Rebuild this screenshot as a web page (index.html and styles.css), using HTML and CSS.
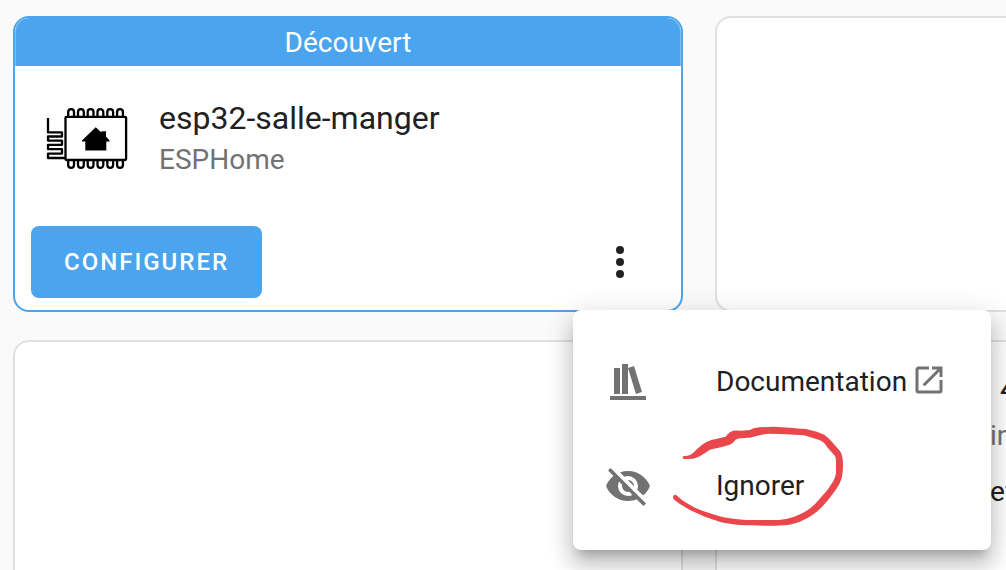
FILE: index.html
```html
<!DOCTYPE html>
<html lang="fr">
<head>
<meta charset="utf-8">
<title>Intégrations</title>
<link rel="stylesheet" href="styles.css">
</head>
<body>
<main class="grid">
  <article class="card card-discovered">
    <header class="banner">Découvert</header>
    <div class="integration">
      <svg class="logo" viewBox="47 98 80 80" aria-hidden="true">
        <g fill="none" stroke="#000" stroke-width="2.3" stroke-linejoin="round">
          <rect x="65.500" y="115.800" width="60.600" height="43.200" rx="1"/>
          <path d="M48 117V131.400H62V135.500H48V139.600H62V143.800H48V148.200H62V152.600H48V157H65"/>
          <path id="pins" d="M68.200 115V111a2.900 2.900 0 0 1 5.800 0V115M78 115V111a2.900 2.900 0 0 1 5.800 0V115M87.700 115V111a2.900 2.900 0 0 1 5.800 0V115M97.500 115V111a2.900 2.900 0 0 1 5.800 0V115M107.300 115V111a2.900 2.900 0 0 1 5.800 0V115M117.100 115V111a2.900 2.900 0 0 1 5.800 0V115"/>
          <use href="#pins" transform="matrix(1 0 0 -1 0 275)"/>
        </g>
        <path d="M95.700 126.200L101.500 131.500V130.200H106V135.500L109.500 139.500V140.500H106.300V149.500H85.300V140.500H82V139.500Z"/>
      </svg>
      <div>
        <h2 class="name">esp32-salle-manger</h2>
        <p class="domain">ESPHome</p>
      </div>
    </div>
    <footer class="actions">
      <button class="configure" type="button">CONFIGURER</button>
      <button class="more" type="button" aria-label="Plus d'actions">
        <svg class="icon" viewBox="0 0 24 24"><path d="M12,16A2,2 0 0,1 14,18A2,2 0 0,1 12,20A2,2 0 0,1 10,18A2,2 0 0,1 12,16M12,10A2,2 0 0,1 14,12A2,2 0 0,1 12,14A2,2 0 0,1 10,12A2,2 0 0,1 12,10M12,4A2,2 0 0,1 14,6A2,2 0 0,1 12,8A2,2 0 0,1 10,6A2,2 0 0,1 12,4Z"/></svg>
      </button>
    </footer>
    <nav class="menu">
      <a class="item" href="#documentation">
        <svg class="icon" viewBox="0 0 24 24" aria-hidden="true"><path d="M9 3V18H12V3H9M12 5L16 18L19 17L15 4L12 5M5 5V18H8V5H5M3 19V21H21V19H3Z"/></svg>
        <span>Documentation</span>
        <svg class="external" viewBox="0 0 24 24" aria-hidden="true"><path d="M14,3V5H17.590L7.760,14.830L9.170,16.240L19,6.410V10H21V3M19,19H5V5H12V3H5C3.890,3 3,3.900 3,5V19A2,2 0 0,0 5,21H19A2,2 0 0,0 21,19V12H19V19Z"/></svg>
      </a>
      <button class="item" type="button">
        <svg class="icon" viewBox="0 0 24 24" aria-hidden="true"><path d="M11.830,9L15,12.160C15,12.110 15,12.050 15,12A3,3 0 0,0 12,9C11.940,9 11.890,9 11.830,9M7.530,9.800L9.080,11.350C9.030,11.560 9,11.770 9,12A3,3 0 0,0 12,15C12.220,15 12.440,14.970 12.650,14.920L14.200,16.470C13.530,16.800 12.790,17 12,17A5,5 0 0,1 7,12C7,11.210 7.200,10.470 7.530,9.800M2,4.270L4.280,6.550L4.730,7C3.080,8.300 1.780,10 1,12C2.730,16.390 7,19.500 12,19.500C13.550,19.500 15.030,19.200 16.380,18.660L16.810,19.080L19.730,22L21,20.730L3.270,3M12,7A5,5 0 0,1 17,12C17,12.640 16.870,13.260 16.640,13.820L19.570,16.750C21.070,15.500 22.270,13.860 23,12C21.270,7.610 17,4.500 12,4.500C10.600,4.500 9.260,4.750 8,5.200L10.170,7.350C10.740,7.130 11.350,7 12,7Z"/></svg>
        <span>Ignorer</span>
      </button>
      <svg class="scribble" viewBox="0 0 600 390" aria-hidden="true"><path d="M71 138C83 139 91 136 99 129C116 112 134 96 154 90L197 80C211 62 220 60 241 62L270 60C286 50 310 52 340 50C374 52 405 54 438 57C458 62 480 67 494 75C512 88 523 104 538 121C553 138 550 180 545 205C539 225 525 244 511 261C490 288 466 315 432 329C398 346 370 347 330 347C275 347 220 346 181 336C143 324 83 303 41 268C35 257 45 249 52 258C80 285 125 304 164 314C211 329 262 331 310 330C361 331 387 329 423 311C459 296 477 268 499 244C516 220 529 204 528 181C527 164 530 149 525 138L501 111C494 98 487 92 466 86L432 76C395 73 360 72 325 71C302 73 290 78 275 82C258 86 240 82 226 90C219 98 215 105 199 107C180 113 164 115 150 119C133 129 119 142 99 146L71 147C67 145 67 140 71 138Z"/></svg>
    </nav>
  </article>
  <article class="card"></article>
  <article class="card"></article>
  <article class="card card-cut">
    <h2 class="name">4</h2>
    <p class="domain">in</p>
    <p class="detail">ef</p>
  </article>
</main>
</body>
</html>
```

FILE: styles.css
```css
* {
  box-sizing: border-box;
}

body {
  margin: 0;
  background: #fafafa;
  color: #212121;
  font-family: Roboto, sans-serif;
  font-size: 28px;
  line-height: 40px;
  overflow: hidden;
}

h2,
p {
  margin: 0;
  font-weight: 400;
}

button {
  border: 0;
  font: inherit;
  color: inherit;
  cursor: pointer;
}

.grid {
  display: grid;
  grid-template-columns: repeat(2, minmax(670px, 1fr));
  grid-auto-rows: minmax(296px, auto);
  gap: 28px 32px;
  padding: 16px 13px;
}

.card {
  position: relative;
  display: flex;
  flex-direction: column;
  background: #fff;
  border: 2px solid #e0e0e0;
  border-radius: 16px;
}

.card-discovered {
  z-index: 1;
  border-color: #4ba5ee;
}

.banner {
  height: 48px;
  line-height: 50px;
  border-radius: 14px 14px 0 0;
  background: #4ba5ee;
  box-shadow: inset 1px 0 rgba(255, 255, 255, 0.3), inset -1px 0 rgba(255, 255, 255, 0.3);
  color: #fff;
  text-align: center;
}

.integration {
  display: flex;
  align-items: center;
  gap: 32px;
  padding: 32px 32px 0;
}

.logo {
  width: 80px;
  height: 80px;
  overflow: visible;
}

.name {
  font-size: 32px;
  line-height: 40px;
}

.domain {
  margin-top: 2px;
  color: #727272;
}

.actions {
  display: flex;
  align-items: center;
  justify-content: space-between;
  margin-top: auto;
  padding: 0 37px 12px 16px;
}

.configure {
  height: 72px;
  padding: 0 33px;
  border-radius: 8px;
  background: #4ba5ee;
  color: #fff;
  font-size: 24px;
  font-weight: 500;
  letter-spacing: 2px;
}

.more {
  display: flex;
  padding: 0;
  background: none;
}

.icon {
  width: 48px;
  height: 48px;
  fill: currentColor;
}

.menu {
  position: absolute;
  top: 292px;
  left: 558px;
  width: 418px;
  padding: 20px 0 12px;
  border-radius: 8px;
  background: #fff;
  box-shadow: 0 10px 10px -6px rgba(0, 0, 0, 0.2), 0 16px 20px 2px rgba(0, 0, 0, 0.14), 0 6px 28px 4px rgba(0, 0, 0, 0.12);
}

.item {
  display: flex;
  align-items: center;
  width: 100%;
  height: 104px;
  padding: 0 31px;
  background: none;
  color: #212121;
  text-decoration: none;
}

.item .icon {
  margin-right: 64px;
  fill: #727272;
}

.external {
  width: 36px;
  height: 36px;
  margin: 0 0 4px 4px;
  fill: #727272;
}

.scribble {
  position: absolute;
  top: 100px;
  left: 87px;
  width: 200px;
  height: 130px;
  fill: #e9474b;
  pointer-events: none;
}

.card-cut {
  padding: 26px 0 0 273px;
}

.card-cut .name {
  padding-left: 10px;
}

.card-cut .domain {
  margin: 8px 0 16px;
}
```
